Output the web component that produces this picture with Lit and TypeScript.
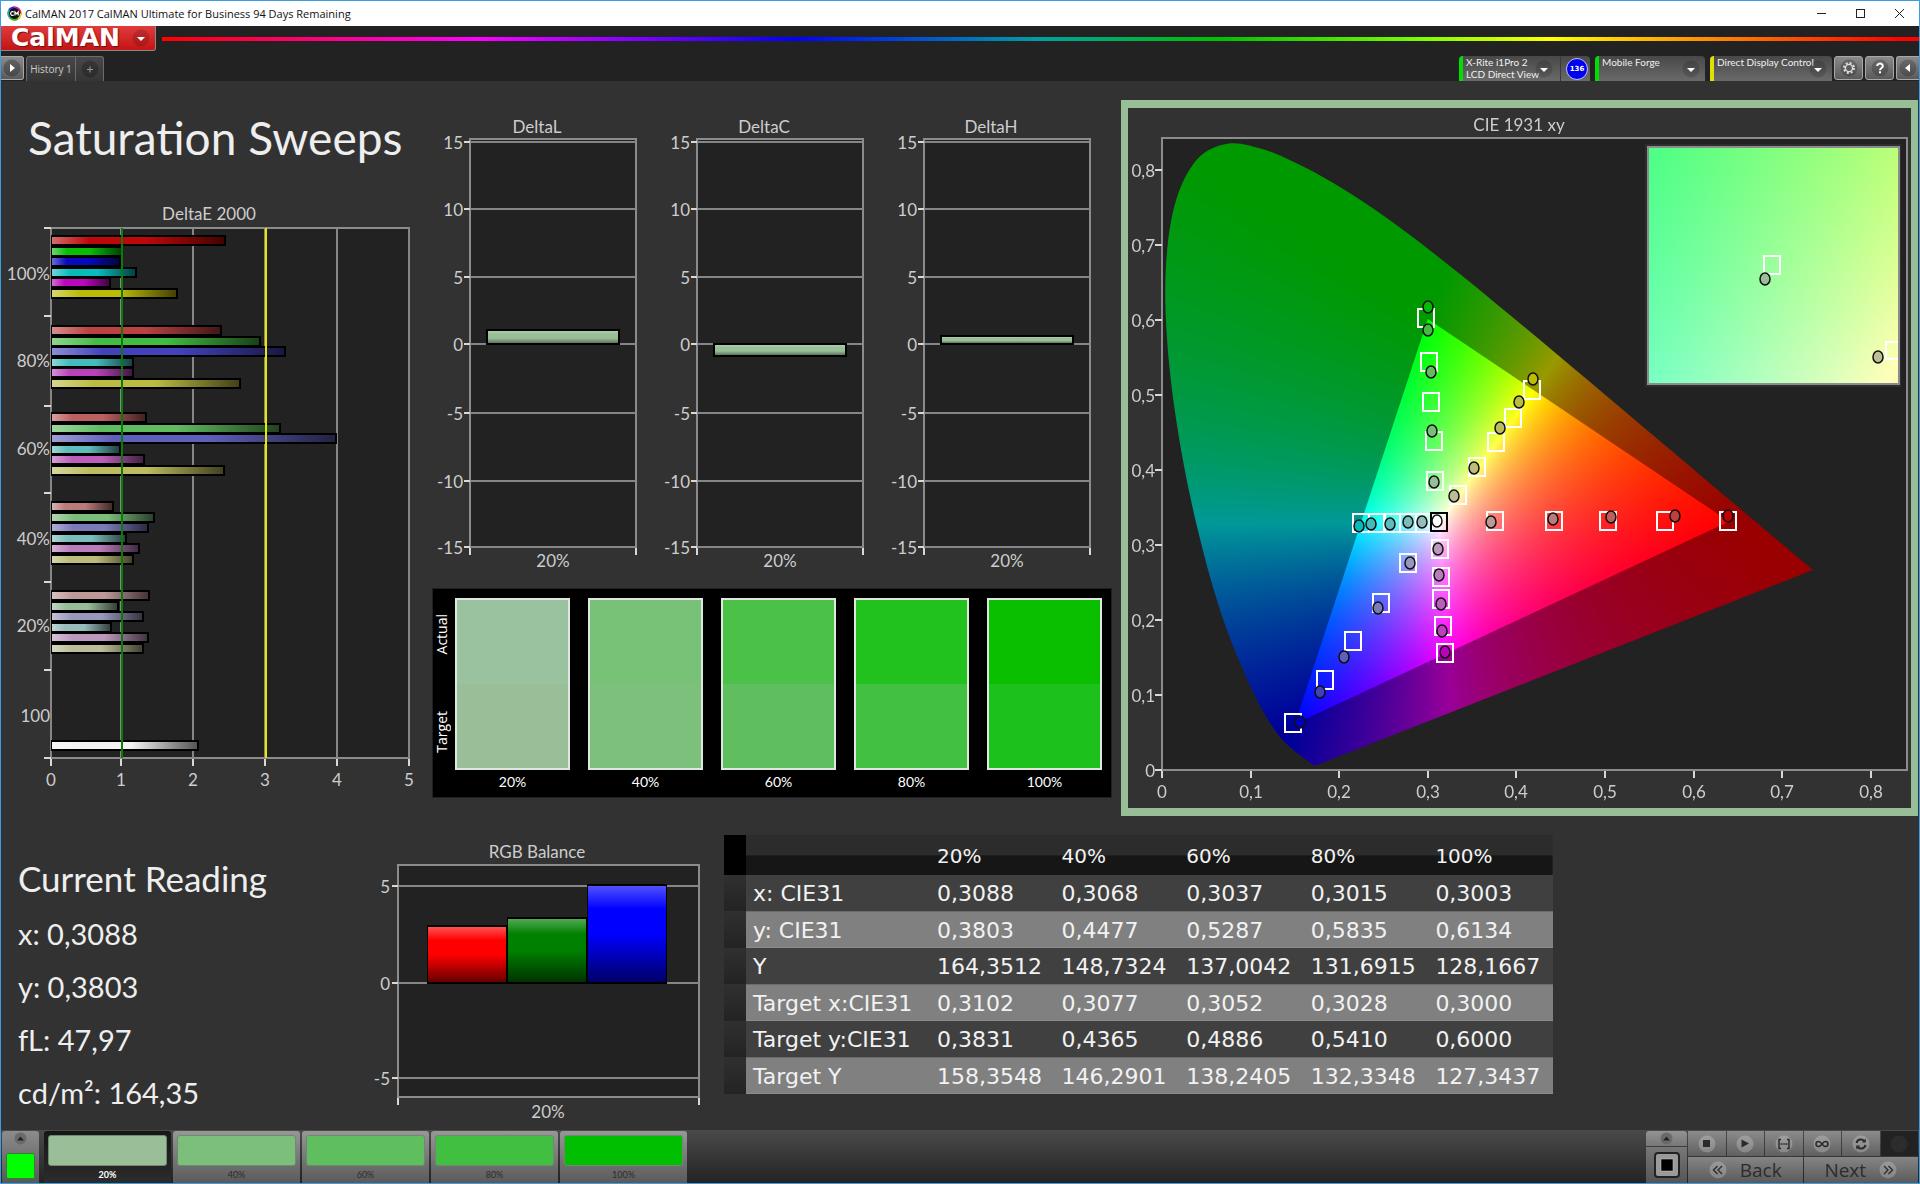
import { LitElement, html, svg, css } from "lit";
import { customElement, property } from "lit/decorators.js";
import { classMap } from "lit/directives/class-map.js";

const chartText = css`
  :host {
    display: block;
  }
  svg {
    display: block;
    width: 100%;
    height: auto;
  }
  text {
    font-family: Lato, "Open Sans", sans-serif;
    font-size: 17px;
    fill: #cdcdcd;
  }
  .mid {
    text-anchor: middle;
  }
  .end {
    text-anchor: end;
  }
  .plot {
    fill: #222222;
    stroke: #8c8c8c;
    stroke-width: 2;
  }
  .grid {
    stroke: #868686;
    stroke-width: 2;
  }
  .tick {
    stroke: #d8d8d8;
    stroke-width: 2;
  }
`;

/* ---------- Horizontal DeltaE bars ---------- */

const HUES = [
  [1, 0, 0],
  [0, 1, 0],
  [0, 0, 1],
  [0, 1, 1],
  [1, 0, 1],
  [1, 1, 0],
];

const tint = (hue: number[], floor: number) =>
  `rgb(${hue.map((c) => (c ? 188 : floor)).join(",")})`;

const DELTA_E = [
  { label: "100%", y: 40, base: 80, floor: 8, ends: [225, 122, 120, 136, 110, 177] },
  { label: "80%", y: 130, base: 167, floor: 66, ends: [221, 260, 285, 133, 133, 240] },
  { label: "60%", y: 217, base: 255, floor: 95, ends: [146, 280, 336, 120, 144, 224] },
  { label: "40%", y: 306, base: 345, floor: 123, ends: [113, 154, 148, 126, 139, 133] },
  { label: "20%", y: 395, base: 432, floor: 152, ends: [149, 118, 143, 111, 148, 143] },
];

@customElement("delta-e-chart")
export class DeltaEChart extends LitElement {
  static styles = chartText;

  private bar(y: number, end: number, fill: string) {
    return svg`
      <rect x="50" y=${y - 5} width=${end - 50} height="11" fill="#000"></rect>
      <rect x="51" y=${y - 3} width=${end - 53} height="7" fill=${fill}></rect>
      <rect x="51" y=${y - 3} width=${end - 53} height="7" fill="url(#sheen)"></rect>`;
  }

  render() {
    const xs = [50, 120, 192, 264, 336, 408];
    const ys = [28, 116, 206, 293, 382, 470, 558];
    return html`
      <svg viewBox="0 0 431 612" role="img" aria-label="DeltaE 2000">
        <defs>
          <linearGradient id="sheen">
            <stop offset="0" stop-color="#fff" stop-opacity="0.4"></stop>
            <stop offset="0.22" stop-color="#fff" stop-opacity="0"></stop>
            <stop offset="0.55" stop-color="#000" stop-opacity="0"></stop>
            <stop offset="1" stop-color="#000" stop-opacity="0.65"></stop>
          </linearGradient>
        </defs>
        <text class="mid" x="208" y="20">DeltaE 2000</text>
        <rect class="plot" x="50" y="28" width="358" height="530"></rect>
        ${xs.map(
          (x, i) => svg`
            <line class="grid" x1=${x} x2=${x} y1="28" y2="558"></line>
            <line class="tick" x1=${x} x2=${x} y1="559" y2="566"></line>
            <text class="mid" x=${x} y="586">${i}</text>`
        )}
        ${ys.map((y) => svg`<line class="tick" x1="43" x2="50" y1=${y} y2=${y}></line>`)}
        ${DELTA_E.map(
          (g) => svg`
            <text class="end" x="49" y=${g.base}>${g.label}</text>
            ${g.ends.map((end, i) =>
              this.bar(g.y + Math.round(i * 10.5), end, tint(HUES[i], g.floor))
            )}`
        )}
        <text class="end" x="49" y="522">100</text>
        ${this.bar(545, 198, "#f2f2f2")}
        <line x1="121" x2="121" y1="28" y2="558" stroke="#0b7a0b" stroke-width="2"></line>
        <line x1="265" x2="265" y1="28" y2="558" stroke="#e8e800" stroke-width="2"></line>
      </svg>
    `;
  }
}

/* ---------- DeltaL / DeltaC / DeltaH ---------- */

@customElement("delta-chart")
export class DeltaChart extends LitElement {
  static styles = chartText;

  @property() heading = "";
  @property({ type: Number }) value = 0;

  render() {
    const rows = [
      { v: "15", y: 27 },
      { v: "10", y: 94 },
      { v: "5", y: 162 },
      { v: "0", y: 229 },
      { v: "-5", y: 298 },
      { v: "-10", y: 366 },
      { v: "-15", y: 432 },
    ];
    const size = Math.round(Math.abs(this.value) * 13.6);
    const top = this.value > 0 ? 230 - size : 228;
    return html`
      <svg viewBox="0 0 227 460" role="img" aria-label=${this.heading}>
        <defs>
          <linearGradient id="sheen" x2="0" y2="1">
            <stop offset="0" stop-color="#fff" stop-opacity="0.2"></stop>
            <stop offset="0.25" stop-color="#fff" stop-opacity="0"></stop>
            <stop offset="0.6" stop-color="#000" stop-opacity="0"></stop>
            <stop offset="1" stop-color="#000" stop-opacity="0.4"></stop>
          </linearGradient>
        </defs>
        <text class="mid" x="105" y="18">${this.heading}</text>
        <rect class="plot" x="38" y="24" width="166" height="408"></rect>
        ${rows.map(
          (r) => svg`
            <line class="grid" x1="38" x2="204" y1=${r.y} y2=${r.y}></line>
            <line class="tick" x1="32" x2="38" y1=${r.y} y2=${r.y}></line>
            <text class="end" x="31" y=${r.y + 7}>${r.v}</text>`
        )}
        <line class="tick" x1="38" x2="38" y1="433" y2="440"></line>
        <line class="tick" x1="204" x2="204" y1="433" y2="440"></line>
        <rect x="54" y=${top} width="134" height=${size} fill="#000"></rect>
        <rect x="56" y=${top + 2} width="130" height=${size - 4} fill="#9abf98"></rect>
        <rect x="56" y=${top + 2} width="130" height=${size - 4} fill="url(#sheen)"></rect>
        <text class="mid" x="121" y="452">20%</text>
      </svg>
    `;
  }
}

/* ---------- RGB balance ---------- */

@customElement("rgb-balance-chart")
export class RgbBalanceChart extends LitElement {
  static styles = chartText;

  render() {
    const rows = [
      { v: "5", y: 46 },
      { v: "0", y: 143 },
      { v: "-5", y: 238 },
    ];
    const bars = [
      { x: 57, y: 85, fill: "#ff0000" },
      { x: 137, y: 77, fill: "#008000" },
      { x: 217, y: 44, fill: "#0000ff" },
    ];
    return html`
      <svg viewBox="0 0 354 290" role="img" aria-label="RGB Balance">
        <defs>
          <linearGradient id="sheen" x2="0" y2="1">
            <stop offset="0" stop-color="#fff" stop-opacity="0.32"></stop>
            <stop offset="0.24" stop-color="#fff" stop-opacity="0"></stop>
            <stop offset="0.5" stop-color="#000" stop-opacity="0"></stop>
            <stop offset="1" stop-color="#000" stop-opacity="0.6"></stop>
          </linearGradient>
        </defs>
        <text class="mid" x="167" y="18">RGB Balance</text>
        <rect class="plot" x="28" y="25" width="301" height="232"></rect>
        ${rows.map(
          (r) => svg`
            <line class="grid" x1="28" x2="329" y1=${r.y} y2=${r.y}></line>
            <line class="tick" x1="22" x2="28" y1=${r.y} y2=${r.y}></line>
            <text class="end" x="20" y=${r.y + 7}>${r.v}</text>`
        )}
        <line class="tick" x1="28" x2="28" y1="258" y2="265"></line>
        <line class="tick" x1="329" x2="329" y1="258" y2="265"></line>
        ${bars.map(
          (b) => svg`
            <rect x=${b.x} y=${b.y} width="80" height=${144 - b.y} fill="#000"></rect>
            <rect x=${b.x + 1} y=${b.y + 2} width="78" height=${140 - b.y} fill=${b.fill}></rect>
            <rect x=${b.x + 1} y=${b.y + 2} width="78" height=${140 - b.y} fill="url(#sheen)"></rect>`
        )}
        <text class="mid" x="178" y="278">20%</text>
      </svg>
    `;
  }
}

/* ---------- CIE 1931 chromaticity diagram ---------- */

const LOCUS: [number, number][] = [
  [0.1741, 0.005], [0.1733, 0.0048], [0.1714, 0.0051], [0.1689, 0.0069],
  [0.1644, 0.0109], [0.1566, 0.0177], [0.144, 0.0297], [0.1355, 0.0399],
  [0.1241, 0.0578], [0.1096, 0.0868], [0.0913, 0.1327], [0.0687, 0.2007],
  [0.0454, 0.295], [0.0235, 0.4127], [0.0082, 0.5384], [0.0039, 0.6548],
  [0.0139, 0.7502], [0.0389, 0.812], [0.0743, 0.8338], [0.1142, 0.8262],
  [0.1547, 0.8059], [0.1929, 0.7816], [0.2296, 0.7543], [0.2658, 0.7243],
  [0.3016, 0.6923], [0.3373, 0.6589], [0.3731, 0.6245], [0.4087, 0.5896],
  [0.4441, 0.5547], [0.4788, 0.5202], [0.5125, 0.4866], [0.5448, 0.4544],
  [0.5752, 0.4242], [0.6029, 0.3965], [0.627, 0.3725], [0.6482, 0.3514],
  [0.6658, 0.334], [0.6915, 0.3083], [0.7079, 0.292], [0.719, 0.2809],
  [0.726, 0.274], [0.7347, 0.2653],
];

const toX = (x: number) => 34 + 886 * x;
const toY = (y: number) => 661 - 750 * y;

/** Brightest linear RGB colour for a chromaticity, scaled by gain. */
function chroma(x: number, y: number, gain: number): number[] {
  const yy = Math.max(y, 0.0001);
  const X = x / yy;
  const Z = (1 - x - yy) / yy;
  const lin = [
    3.2406 * X - 1.5372 - 0.4986 * Z,
    -0.9689 * X + 1.8758 + 0.0415 * Z,
    0.0557 * X - 0.204 + 1.057 * Z,
  ].map((c) => Math.max(c, 0));
  const top = Math.max(...lin);
  return lin.map((c) => (255 * gain * c) / top);
}

function field(
  w: number,
  h: number,
  at: (px: number, py: number) => [number, number],
  gain: number
): HTMLCanvasElement {
  const c = document.createElement("canvas");
  c.width = w;
  c.height = h;
  const ctx = c.getContext("2d")!;
  const img = ctx.createImageData(w, h);
  for (let py = 0; py < h; py++) {
    for (let px = 0; px < w; px++) {
      const [x, y] = at(px, py);
      const [r, g, b] = chroma(x, y, gain);
      const i = 4 * (py * w + px);
      img.data[i] = r;
      img.data[i + 1] = g;
      img.data[i + 2] = b;
      img.data[i + 3] = 255;
    }
  }
  ctx.putImageData(img, 0, 0);
  return c;
}

const TARGETS: [number, number][] = [
  [298, 210], [301, 254], [303, 294], [306, 333], [307, 373],
  [404, 282], [385, 310], [368, 334], [349, 359], [330, 387],
  [367, 413], [426, 413], [480, 413], [537, 413], [600, 413],
  [312, 441], [313, 469], [313, 491], [315, 518], [317, 545],
  [233, 415], [249, 415], [264, 415], [280, 415], [296, 415],
  [280, 455], [253, 495], [225, 533], [197, 572], [165, 615],
];

const READINGS: { hue: number[]; points: [number, number][] }[] = [
  { hue: [0, 1, 0], points: [[306, 374], [304, 323], [303, 264], [300, 222], [300, 199]] },
  { hue: [1, 1, 0], points: [[326, 388], [346, 360], [372, 320], [391, 294], [405, 271]] },
  { hue: [1, 0, 0], points: [[363, 414], [425, 411], [483, 409], [547, 408], [600, 408]] },
  { hue: [1, 0, 1], points: [[310, 441], [311, 467], [313, 496], [314, 523], [317, 544]] },
  { hue: [0, 1, 1], points: [[294, 414], [280, 414], [262, 416], [243, 416], [231, 418]] },
  { hue: [0, 0, 1], points: [[282, 455], [250, 500], [216, 549], [192, 584], [172, 614]] },
];

const FLOORS = [152, 123, 95, 64, 0];

@customElement("cie-chart")
export class CieChart extends LitElement {
  static styles = [
    chartText,
    css`
      .stack {
        display: grid;
      }
      .stack > * {
        grid-area: 1 / 1;
      }
      canvas {
        display: block;
        width: 100%;
        height: auto;
      }
      .target {
        fill: none;
        stroke: #ffffff;
        stroke-width: 2;
      }
      .reading {
        stroke: #101010;
        stroke-width: 1.5;
      }
    `,
  ];

  firstUpdated() {
    const canvas = this.renderRoot.querySelector("canvas")!;
    const ctx = canvas.getContext("2d")!;
    const w = canvas.width;
    const h = canvas.height;
    ctx.fillStyle = "#222222";
    ctx.fillRect(34, 30, 745, 632);

    const at = (px: number, py: number): [number, number] => [
      (px - 34) / 886,
      (661 - py) / 750,
    ];
    const p = LOCUS.map(([x, y]) => [toX(x), toY(y)]);
    ctx.save();
    ctx.beginPath();
    ctx.moveTo(p[0][0], p[0][1]);
    for (let i = 0; i < p.length - 1; i++) {
      const a = p[Math.max(i - 1, 0)];
      const b = p[i];
      const c = p[i + 1];
      const d = p[Math.min(i + 2, p.length - 1)];
      ctx.bezierCurveTo(
        b[0] + (c[0] - a[0]) / 6, b[1] + (c[1] - a[1]) / 6,
        c[0] - (d[0] - b[0]) / 6, c[1] - (d[1] - b[1]) / 6,
        c[0], c[1]
      );
    }
    ctx.closePath();
    ctx.clip();
    ctx.drawImage(field(w, h, at, 0.6), 0, 0);
    ctx.restore();

    ctx.save();
    ctx.beginPath();
    ctx.moveTo(toX(0.3), toY(0.6));
    ctx.lineTo(toX(0.64), toY(0.33));
    ctx.lineTo(toX(0.15), toY(0.06));
    ctx.closePath();
    ctx.clip();
    ctx.drawImage(field(w, h, at, 1), 0, 0);
    ctx.restore();

    ctx.fillStyle = "#2e2e2e";
    ctx.fillRect(517, 36, 256, 243);
    ctx.drawImage(
      field(
        250,
        236,
        (px, py) => [0.3102 + (px - 125) / 5150, 0.3831 - (py - 118) / 5150],
        1
      ),
      521,
      40
    );
  }

  render() {
    const xs = [0, 1, 2, 3, 4, 5, 6, 7, 8];
    const name = (i: number) => (i ? `0,${i}` : "0");
    return html`
      <div class="stack">
        <canvas width="783" height="700"></canvas>
        <svg viewBox="0 0 783 700" role="img" aria-label="CIE 1931 xy">
          <text class="mid" x="391" y="23">CIE 1931 xy</text>
          <rect x="34" y="30" width="745" height="632" fill="none" stroke="#8c8c8c" stroke-width="2"></rect>
          ${xs.map((i) => {
            const x = Math.round(toX(i / 10));
            const y = Math.round(toY(i / 10)) + 1;
            return svg`
              <line class="tick" x1=${x} x2=${x} y1="663" y2="670"></line>
              <line class="tick" x1="27" x2="34" y1=${y} y2=${y}></line>
              <text class="mid" x=${x} y="690">${name(i)}</text>
              <text class="end" x="27" y=${y + 7}>${name(i)}</text>`;
          })}
          ${TARGETS.map(
            ([x, y]) => svg`<rect class="target" x=${x - 8} y=${y - 9} width="16" height="18"></rect>`
          )}
          <rect x="303" y="405" width="16" height="18" fill="none" stroke="#000" stroke-width="2"></rect>
          <ellipse class="reading" cx="309" cy="413" rx="5" ry="6" fill="#fff"></ellipse>
          ${READINGS.map((s) =>
            s.points.map(
              ([x, y], i) => svg`<ellipse class="reading" cx=${x} cy=${y} rx="5" ry="6"
                fill=${tint(s.hue, FLOORS[i])}></ellipse>`
            )
          )}
          <rect x="636" y="148" width="16" height="18" class="target"></rect>
          <ellipse class="reading" cx="637" cy="171" rx="5" ry="6" fill="#9abf98"></ellipse>
          <path class="target" d="M770 234h-12v17h12"></path>
          <ellipse class="reading" cx="750" cy="249" rx="5" ry="6" fill="#bebe98"></ellipse>
          <rect x="520" y="39" width="251" height="237" fill="none" stroke="#8c8c8c" stroke-width="2"></rect>
        </svg>
      </div>
    `;
  }
}

/* ---------- Page ---------- */

const STEPS = [
  { label: "20%", actual: "#9bc29f", target: "#9abe98", chip: "#9abf98" },
  { label: "40%", actual: "#78c278", target: "#7cc07c", chip: "#7bbf7b" },
  { label: "60%", actual: "#4bc247", target: "#5fbf5f", chip: "#5fbf5f" },
  { label: "80%", actual: "#22c21e", target: "#41c041", chip: "#40bf40" },
  { label: "100%", actual: "#0abf00", target: "#1cc11c", chip: "#00bf00" },
];

const ROWS = [
  ["x: CIE31", "0,3088", "0,3068", "0,3037", "0,3015", "0,3003"],
  ["y: CIE31", "0,3803", "0,4477", "0,5287", "0,5835", "0,6134"],
  ["Y", "164,3512", "148,7324", "137,0042", "131,6915", "128,1667"],
  ["Target x:CIE31", "0,3102", "0,3077", "0,3052", "0,3028", "0,3000"],
  ["Target y:CIE31", "0,3831", "0,4365", "0,4886", "0,5410", "0,6000"],
  ["Target Y", "158,3548", "146,2901", "138,2405", "132,3348", "127,3437"],
];

const arrow = html`<svg class="knob" viewBox="0 0 18 18" aria-hidden="true">
  <circle cx="9" cy="9" r="8.5" fill="#000" fill-opacity="0.14"></circle>
  <path d="M5 8h8l-4 4z" fill="#fff"></path>
</svg>`;

const TRANSPORT = [
  { name: "Stop", icon: svg`<rect x="5" y="5" width="7" height="7" fill="#2b2b2b"></rect>` },
  { name: "Play", icon: svg`<path d="M5.5 4.5v8l7.500-4z" fill="#2b2b2b"></path>` },
  {
    name: "Read range",
    icon: svg`<path d="M6 4.500H4v9h2M12 4.500h2v9h-2" fill="none" stroke="#2b2b2b" stroke-width="1.500"></path>
      <path d="M5.500 9h2M8.300 9h1.500M10.500 9h2" stroke="#2b2b2b" stroke-width="1.500"></path>`,
  },
  {
    name: "Read continuously",
    icon: svg`<path d="M9 9C7.500 7 6.500 6.500 5.500 6.500a2.500 2.500 0 0 0 0 5C6.500 11.500 7.500 11 9 9s2.500-2.500 3.500-2.500a2.500 2.500 0 0 1 0 5C11.500 11.500 10.500 11 9 9z" fill="none" stroke="#2b2b2b" stroke-width="1.500"></path>`,
  },
  {
    name: "Refresh",
    icon: svg`<path d="M4.500 8a4.500 4.500 0 0 1 7.800-2M13.500 10a4.500 4.500 0 0 1-7.800 2" fill="none" stroke="#2b2b2b" stroke-width="2"></path>
      <path d="M13.800 3.500v4h-4zM4.200 14.500v-4h4z" fill="#2b2b2b"></path>`,
  },
];

@customElement("app-root")
export class AppRoot extends LitElement {
  static styles = css`
    :host {
      display: block;
      font-family: Lato, "Open Sans", sans-serif;
      color: #eeeeee;
    }
    * {
      box-sizing: border-box;
    }
    button {
      font: inherit;
      color: inherit;
      border: 0;
      margin: 0;
      padding: 0;
      background: none;
    }
    .window {
      display: flex;
      flex-direction: column;
      min-height: 100vh;
      border: 1px solid #3a9fe0;
      background: #323232;
    }
    .titlebar {
      display: flex;
      align-items: center;
      height: 25px;
      padding: 0 14px 0 6px;
      background: #ffffff;
      color: #111111;
      font-family: "Open Sans", sans-serif;
      font-size: 11px;
      gap: 3px;
    }
    .app-icon {
      width: 15px;
      height: 15px;
    }
    .window-buttons {
      display: flex;
      gap: 28px;
      margin-left: auto;
    }
    .window-buttons button,
    .window-buttons svg {
      display: block;
      width: 11px;
      height: 11px;
    }
    .brandbar {
      display: flex;
      align-items: center;
      height: 26px;
      background: #222222;
      gap: 6px;
    }
    .brand {
      display: flex;
      align-items: center;
      align-self: flex-start;
      justify-content: space-between;
      width: 155px;
      height: 25px;
      padding: 0 5px 0 10px;
      border-right: 1px solid #8a8a8a;
      border-bottom: 1px solid #8a8a8a;
      border-radius: 0 0 3px 0;
      background: linear-gradient(#e03c3c, #c41414);
      color: #ffffff;
      font-family: "DejaVu Sans", sans-serif;
      font-size: 25px;
      font-weight: 700;
      line-height: 24px;
      text-shadow: 1px 1px 1px #701010;
    }
    .spectrum {
      flex: 1;
      height: 4px;
      background: linear-gradient(
        90deg,
        #ff0000 0%,
        #ff00ff 18%,
        #0000ff 36%,
        #00a0a0 50%,
        #00c000 60%,
        #80ff00 72%,
        #ffff00 79%,
        #ff0000 99%
      );
    }
    .toolbar {
      display: flex;
      align-items: flex-end;
      height: 29px;
      background: #222222;
      font-size: 12px;
    }
    .knob {
      display: block;
      flex: none;
      width: 18px;
      height: 18px;
    }
    .square {
      display: flex;
      align-items: center;
      justify-content: center;
      width: 29px;
      height: 24px;
      margin-bottom: 1px;
      border: 1px solid #a8a8a8;
      border-radius: 3px;
      background: linear-gradient(#8a8a8a, #5a5a5a);
    }
    .square.first {
      width: 23px;
      border-left: 0;
      border-radius: 0 3px 3px 0;
    }
    .square.last {
      width: 23px;
      border-right: 0;
      border-radius: 3px 0 0 3px;
    }
    .tab {
      height: 25px;
      border: 1px solid #6c6c6c;
      border-bottom: 0;
      background: linear-gradient(#484848, #353535);
      color: #cccccc;
      display: flex;
      align-items: center;
      justify-content: center;
    }
    .tab.history {
      width: 50px;
      margin-left: 2px;
      border-radius: 3px 0 0 0;
      font-family: "Open Sans", sans-serif;
      font-size: 10px;
    }
    .tab.add {
      width: 28px;
      border-left: 0;
      border-radius: 0 3px 0 0;
    }
    .devices {
      display: flex;
      align-items: flex-end;
      margin-left: auto;
      gap: 5px;
    }
    .device {
      display: flex;
      height: 25px;
      border-radius: 4px 4px 0 0;
      overflow: hidden;
      background: linear-gradient(#484848, #6a6a6a);
    }
    .device button {
      display: flex;
      flex: 1;
      justify-content: space-between;
      align-items: center;
      min-width: 0;
      padding: 0 5px 0 3px;
      border-left: 4px solid #00dd00;
      text-align: left;
      white-space: nowrap;
      line-height: 12px;
      font-size: 10px;
      color: #f0f0f0;
    }
    .device button span {
      align-self: flex-start;
      min-width: 0;
    }
    .device.meter {
      width: 131px;
    }
    .device.meter button {
      padding-right: 7px;
    }
    .device.source {
      width: 110px;
    }
    .device.display {
      width: 122px;
    }
    .device.display button {
      border-left-color: #e0e000;
    }
    .badge {
      display: flex;
      align-items: center;
      padding: 0 2px 0 5px;
      border-left: 1px solid #3a3a3a;
    }
    .badge b {
      width: 22px;
      height: 22px;
      border: 1px solid #c0c0ff;
      border-radius: 50%;
      background: #0000f0;
      font-family: "DejaVu Sans", sans-serif;
      font-size: 7px;
      line-height: 20px;
      text-align: center;
      color: #ffffff;
    }
    .actions {
      display: flex;
      gap: 2px;
      margin-left: 2px;
    }
    .main {
      flex: 1;
      padding: 1px 1px 0 0;
    }
    .upper {
      display: grid;
      grid-template-columns: 431fr 681fr 805fr;
      align-items: start;
    }
    h1 {
      margin: 0;
      padding: 28px 0 0 27px;
      height: 118px;
      font-size: 46px;
      font-weight: 400;
      line-height: 56px;
      white-space: nowrap;
    }
    .deltas {
      display: grid;
      grid-template-columns: repeat(3, 1fr);
      padding-top: 33px;
    }
    .compare {
      display: flex;
      gap: 18px;
      margin: 13px 1px 0 0;
      padding: 9px 9px 6px 0;
      border: 1px solid #202020;
      background: #000000;
      font-size: 14px;
      line-height: 18px;
      color: #ffffff;
    }
    .sides {
      display: flex;
      flex-direction: column;
      justify-content: space-between;
      width: 21px;
      margin-right: -17px;
      padding: 16px 0 38px;
      font-family: "Open Sans", sans-serif;
    }
    .sides span {
      writing-mode: vertical-rl;
      transform: rotate(180deg);
    }
    .step {
      flex: 1;
      text-align: center;
    }
    .pair {
      margin-bottom: 3px;
      border: 2px solid #dfe8df;
    }
    .pair div {
      height: 84px;
    }
    .cie {
      margin: 18px 0 4px 8px;
      border: solid #98be98;
      border-width: 8px 7px;
      background: #323232;
    }
    .lower {
      display: grid;
      grid-template-columns: 369fr 354fr 829fr 365fr;
      align-items: start;
    }
    .reading {
      padding: 33px 0 0 17px;
    }
    h2 {
      margin: 0 0 4px;
      font-size: 35px;
      font-weight: 400;
      line-height: 50px;
    }
    .reading p {
      margin: 0;
      font-size: 29px;
      line-height: 53px;
    }
    .balance {
      padding-top: 20px;
    }
    table {
      width: 100%;
      margin-top: 15px;
      border-collapse: collapse;
      table-layout: fixed;
      font-family: "DejaVu Sans", sans-serif;
      font-size: 22px;
      text-align: left;
      color: #f2f2f2;
    }
    th {
      font-weight: 400;
    }
    th,
    td {
      padding: 2px 0 0 7px;
      line-height: 26px;
      white-space: nowrap;
    }
    .c-stub {
      width: 22px;
    }
    .c-name {
      width: 184px;
    }
    thead tr {
      height: 40px;
      background: linear-gradient(#2c2c2c 0 50%, #161616 52% 100%);
      font-size: 20px;
    }
    thead .stub {
      background: #000000;
    }
    tbody tr {
      height: 36px;
      background: #404040;
    }
    tbody tr:nth-child(even) {
      height: 37px;
      background: #808080;
      box-shadow: inset 0 1px #6c6c6c, inset 0 -1px #8c8c8c;
    }
    tbody .stub {
      background: linear-gradient(#303030, #232323);
    }
    .footer {
      display: flex;
      align-items: stretch;
      height: 53px;
      padding: 1px 1px 0 1px;
      background: linear-gradient(#4a4a4a, #232323);
      color: #2c2c2c;
    }
    .pattern {
      display: flex;
      flex-direction: column;
      align-items: center;
      justify-content: space-between;
      width: 37px;
      margin-right: 5px;
      padding: 1px 0 4px;
      border-radius: 3px 3px 0 0;
      background: linear-gradient(#8c8c8c, #585858);
    }
    .pattern i {
      width: 29px;
      height: 26px;
      border: 1px solid #3c7a3c;
      border-radius: 2px;
      background: #00ff00;
    }
    .mini {
      display: block;
      width: 13px;
      height: 13px;
    }
    .chip {
      display: flex;
      flex-direction: column;
      width: 127px;
      margin-right: 2px;
      padding: 4px 4px 1px;
      border-radius: 3px 3px 0 0;
      background: linear-gradient(#979797, #5a5a5a);
      font-size: 9px;
      line-height: 14px;
      text-align: center;
    }
    .chip i {
      height: 31px;
      margin-bottom: 2px;
      border: 1px solid #6f8a6f;
      border-radius: 3px;
    }
    .chip.current {
      background: linear-gradient(#161616, #2c2c2c);
      color: #ffffff;
      font-weight: 700;
    }
    .panel {
      display: flex;
      flex-direction: column;
      width: 41px;
      margin-left: auto;
      margin-right: 1px;
    }
    .panel button {
      display: flex;
      align-items: center;
      justify-content: center;
      background: linear-gradient(#939393, #777777);
    }
    .panel .up {
      height: 15px;
      margin-bottom: 1px;
      border-radius: 3px 3px 0 0;
    }
    .panel .monitor {
      flex: 1;
      background: linear-gradient(#777777, #555555);
    }
    .monitor svg {
      display: block;
      width: 28px;
      height: 28px;
    }
    .controls {
      display: grid;
      width: 230px;
      grid-template-columns: repeat(6, 1fr);
      grid-template-rows: 25px 26px;
      gap: 1px;
    }
    .controls button {
      display: flex;
      align-items: center;
      justify-content: center;
      background: linear-gradient(#8c8c8c, #606060);
    }
    .controls .off {
      background: #222222;
    }
    .controls .wide {
      grid-column: span 3;
      gap: 13px;
      font-family: "Open Sans", sans-serif;
      font-size: 19px;
      line-height: 24px;
      background: linear-gradient(#858585, #5a5a5a);
    }
  `;

  private triangleUp() {
    return html`<svg class="mini" viewBox="0 0 13 13" aria-hidden="true">
      <circle cx="6.5" cy="6.5" r="6" fill="#6a6a6a"></circle>
      <path d="M3 8.500h7l-3.500-4z" fill="#222"></path>
    </svg>`;
  }

  render() {
    return html`
      <div class="window">
        <header class="titlebar">
          <svg class="app-icon" viewBox="0 0 16 16" aria-hidden="true">
            <circle cx="8" cy="8" r="7.500" fill="#e02020"></circle>
            <path d="M8 8V.5A7.500 7.500 0 0 0 1.500 4z" fill="#3030f0"></path>
            <path d="M8 8L1.500 4A7.500 7.500 0 0 0 4 14.300z" fill="#10c0a0"></path>
            <path d="M8 8L4 14.300a7.500 7.500 0 0 0 8 0z" fill="#30c020"></path>
            <path d="M8 8l4 6.300A7.500 7.500 0 0 0 15.500 8z" fill="#e0e020"></path>
            <path d="M8 8V.5a7.500 7.500 0 0 1 6.500 4z" fill="#d020c0"></path>
            <circle cx="8" cy="8" r="5.800" fill="#111"></circle>
            <path d="M7.200 6.500a2 2 0 1 0 0 3M8.500 10V6.300l1.700 2 1.700-2V10" fill="none" stroke="#fff" stroke-width="1.300"></path>
          </svg>
          <span>CalMAN 2017 CalMAN Ultimate for Business 94 Days Remaining</span>
          <div class="window-buttons">
            <button aria-label="Minimize">
              <svg viewBox="0 0 11 11"><path d="M1 5.500h9" stroke="#222"></path></svg>
            </button>
            <button aria-label="Maximize">
              <svg viewBox="0 0 11 11"><rect x="1.500" y="1.500" width="8" height="8" fill="none" stroke="#222"></rect></svg>
            </button>
            <button aria-label="Close">
              <svg viewBox="0 0 11 11"><path d="M1 1l9 9M10 1l-9 9" stroke="#222"></path></svg>
            </button>
          </div>
        </header>

        <div class="brandbar">
          <button class="brand" aria-haspopup="menu">
            <span>CalMAN</span>
            ${arrow}
          </button>
          <div class="spectrum"></div>
        </div>

        <nav class="toolbar">
          <button class="square first" aria-label="Expand">
            <svg class="knob" viewBox="0 0 18 18">
              <circle cx="9" cy="9" r="8.500" fill="#000" fill-opacity="0.25"></circle>
              <path d="M7 5v8l5-4z" fill="#fff"></path>
            </svg>
          </button>
          <button class="tab history">History 1</button>
          <button class="tab add" aria-label="Add tab">
            <svg class="knob" viewBox="0 0 18 18">
              <circle cx="9" cy="9" r="8.500" fill="#000" fill-opacity="0.22"></circle>
              <path d="M6 9.500h6M9 6.500v6" stroke="#999"></path>
            </svg>
          </button>
          <div class="devices">
            <div class="device meter">
              <button aria-haspopup="menu">
                <span>X-Rite i1Pro 2<br />LCD Direct View</span>
                ${arrow}
              </button>
              <div class="badge"><b>136</b></div>
            </div>
            <div class="device source">
              <button aria-haspopup="menu"><span>Mobile Forge</span>${arrow}</button>
            </div>
            <div class="device display">
              <button aria-haspopup="menu"><span>Direct Display Control</span>${arrow}</button>
            </div>
          </div>
          <div class="actions">
            <button class="square" aria-label="Settings">
              <svg class="knob" viewBox="0 0 18 18">
                <circle cx="9" cy="9" r="8.500" fill="#000" fill-opacity="0.2"></circle>
                <circle cx="9" cy="9" r="5" fill="none" stroke="#ddd" stroke-width="2" stroke-dasharray="2 1.930"></circle>
                <circle cx="9" cy="9" r="3.600" fill="none" stroke="#ddd" stroke-width="1.400"></circle>
              </svg>
            </button>
            <button class="square" aria-label="Help">
              <svg class="knob" viewBox="0 0 18 18">
                <circle cx="9" cy="9" r="8.500" fill="#000" fill-opacity="0.2"></circle>
                <path d="M6.200 7a2.800 2.500 0 1 1 4.400 2C9.500 9.700 9 10 9 11.200" fill="none" stroke="#fff" stroke-width="2"></path>
                <rect x="8" y="12.300" width="2" height="2" fill="#fff"></rect>
              </svg>
            </button>
            <button class="square last" aria-label="Collapse">
              <svg class="knob" viewBox="0 0 18 18">
                <circle cx="9" cy="9" r="8.500" fill="#000" fill-opacity="0.2"></circle>
                <path d="M11 5v8L6 9z" fill="#fff"></path>
              </svg>
            </button>
          </div>
        </nav>

        <main class="main">
          <section class="upper">
            <div>
              <h1>Saturation Sweeps</h1>
              <delta-e-chart></delta-e-chart>
            </div>
            <div>
              <div class="deltas">
                <delta-chart heading="DeltaL" value="1.2"></delta-chart>
                <delta-chart heading="DeltaC" value="-1.05"></delta-chart>
                <delta-chart heading="DeltaH" value="0.7"></delta-chart>
              </div>
              <div class="compare">
                <div class="sides"><span>Actual</span><span>Target</span></div>
                ${STEPS.map(
                  (s) => html`<div class="step">
                    <div class="pair">
                      <div style="background:${s.actual}"></div>
                      <div style="background:${s.target}"></div>
                    </div>
                    ${s.label}
                  </div>`
                )}
              </div>
            </div>
            <div class="cie"><cie-chart></cie-chart></div>
          </section>

          <section class="lower">
            <div class="reading">
              <h2>Current Reading</h2>
              <p>x: 0,3088</p>
              <p>y: 0,3803</p>
              <p>fL: 47,97</p>
              <p>cd/m²: 164,35</p>
            </div>
            <rgb-balance-chart class="balance"></rgb-balance-chart>
            <table>
              <colgroup>
                <col class="c-stub" />
                <col class="c-name" />
                <col span="5" />
              </colgroup>
              <thead>
                <tr>
                  <td class="stub"></td>
                  <td></td>
                  ${STEPS.map((s) => html`<th scope="col">${s.label}</th>`)}
                </tr>
              </thead>
              <tbody>
                ${ROWS.map(
                  ([name, ...values]) => html`<tr>
                    <td class="stub"></td>
                    <th scope="row">${name}</th>
                    ${values.map((v) => html`<td>${v}</td>`)}
                  </tr>`
                )}
              </tbody>
            </table>
          </section>
        </main>

        <footer class="footer">
          <button class="pattern" aria-label="Pattern window">
            ${this.triangleUp()}<i></i>
          </button>
          ${STEPS.map(
            (s, i) => html`<button class=${classMap({ chip: true, current: i === 0 })}>
              <i style="background:${s.chip}"></i>${s.label}
            </button>`
          )}
          <div class="panel">
            <button class="up" aria-label="Show panel">${this.triangleUp()}</button>
            <button class="monitor" aria-label="Full screen">
              <svg viewBox="0 0 28 28">
                <rect x="2" y="2" width="24" height="24" rx="3" fill="#9a9a9a" stroke="#222" stroke-width="2"></rect>
                <rect x="8" y="8" width="12" height="12" fill="#000" stroke="#ccc" stroke-width="0.500"></rect>
              </svg>
            </button>
          </div>
          <div class="controls">
            ${TRANSPORT.map(
              (t) => html`<button aria-label=${t.name}>
                <svg class="knob" viewBox="0 0 18 18">
                  <circle cx="9" cy="9" r="8.500" fill="#fff" fill-opacity="0.22"></circle>
                  ${t.icon}
                </svg>
              </button>`
            )}
            <button class="off" aria-label="Record">
              <svg class="knob" viewBox="0 0 18 18"><circle cx="9" cy="9" r="8.500" fill="#2c2c2c"></circle></svg>
            </button>
            <button class="wide">
              <svg class="knob" viewBox="0 0 18 18" aria-hidden="true">
                <circle cx="9" cy="9" r="8.500" fill="#fff" fill-opacity="0.22"></circle>
                <path d="M8.500 5l-4 4 4 4M13 5L9 9l4 4" fill="none" stroke="#2b2b2b" stroke-width="1.300"></path>
              </svg>
              Back
            </button>
            <button class="wide">
              Next
              <svg class="knob" viewBox="0 0 18 18" aria-hidden="true">
                <circle cx="9" cy="9" r="8.500" fill="#fff" fill-opacity="0.22"></circle>
                <path d="M5 5l4 4-4 4M9.500 5l4 4-4 4" fill="none" stroke="#2b2b2b" stroke-width="1.300"></path>
              </svg>
            </button>
          </div>
        </footer>
      </div>
    `;
  }
}
